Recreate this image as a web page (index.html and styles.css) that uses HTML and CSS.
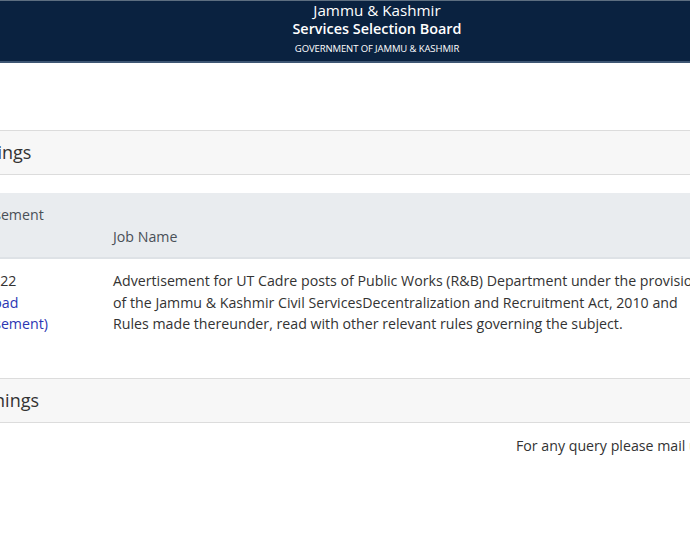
FILE: index.html
```html
<!DOCTYPE html>
<html lang="en">
<head>
<meta charset="utf-8">
<title>JKSSB</title>
<link rel="stylesheet" href="styles.css">
</head>
<body>
<header class="topbar">
  <div class="brand">
    <div class="brand-line1">Jammu &amp; Kashmir</div>
    <div class="brand-line2">Services Selection Board</div>
    <div class="brand-line3">GOVERNMENT OF JAMMU &amp; KASHMIR</div>
  </div>
</header>
<main class="main">
  <section class="panel">
    <div class="panel-head">Current Openings</div>
    <div class="panel-body">
      <table class="jobs">
        <thead>
          <tr>
            <th class="col-adv">Advertisement<br>No.</th>
            <th class="col-job">Job Name</th>
          </tr>
        </thead>
        <tbody>
          <tr>
            <td class="col-adv">05 of 2022<br><a href="#">(Download Advertisement)</a></td>
            <td class="col-job">Advertisement for UT Cadre posts of Public Works (R&amp;B) Department under the provisions of the Jammu &amp; Kashmir Civil ServicesDecentralization and Recruitment Act, 2010 and Rules made thereunder, read with other relevant rules governing the subject.</td>
          </tr>
        </tbody>
      </table>
    </div>
    <div class="panel-head">Previous Openings</div>
  </section>
  <p class="query">For any query please mail us at jkssb-jk@nic.in</p>
</main>
</body>
</html>
```

FILE: styles.css
```css
html, body {
  margin: 0;
  padding: 0;
  background: #ffffff;
  overflow: hidden;
}
body {
  width: 690px;
  height: 550px;
  font-family: "Open Sans", "Noto Sans", sans-serif;
  color: #333333;
}
.topbar {
  height: 60px;
  background: #0a2240;
  border-top: 1px solid #5d6e80;
  border-bottom: 2px solid #3e5673;
  display: flex;
  justify-content: center;
  padding-left: 64px;
}
.brand {
  display: flex;
  flex-direction: column;
  align-items: center;
  color: #ffffff;
}
.brand-line1 {
  font-size: 15.2px;
  line-height: 19px;
}
.brand-line2 {
  font-size: 14.4px;
  line-height: 18px;
  font-weight: 600;
}
.brand-line3 {
  font-size: 9.5px;
  line-height: 14px;
  margin-top: 4px;
  letter-spacing: -0.1px;
}
.main {
  margin-left: -138px;
  width: 1100px;
  padding-top: 67px;
}
.panel-head {
  background: #f7f7f7;
  border-top: 1px solid #dcdcdc;
  border-bottom: 1px solid #dcdcdc;
  padding: 0 20px;
  height: 43px;
  line-height: 43px;
  font-size: 18px;
  color: #333333;
}
.panel-body {
  padding: 18px 20px 32px 73px;
}
.jobs {
  border-collapse: collapse;
  font-size: 14.2px;
  line-height: 21.5px;
}
.jobs th {
  background: #e9ecef;
  color: #495057;
  font-weight: 400;
  text-align: left;
  vertical-align: bottom;
  padding: 11px 12px 10px;
  border-bottom: 2px solid #dee2e6;
}
.jobs td {
  vertical-align: top;
  padding: 11px 12px;
}
.jobs .col-adv {
  width: 142px;
}
.jobs .col-job {
  width: 596px;
}
.jobs a {
  color: #2c36b3;
  text-decoration: none;
}
.query {
  margin: 13px 0 0;
  padding-left: 654px;
  font-size: 14.2px;
  line-height: 20px;
  white-space: nowrap;
  color: #333333;
}
```
